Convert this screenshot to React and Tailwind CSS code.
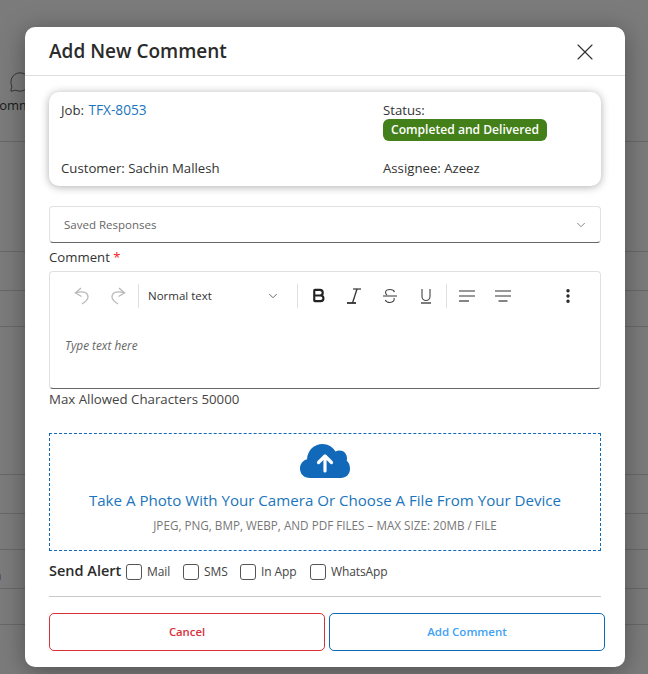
import { ChevronDown, X, Bold, EllipsisVertical, MessageCircle } from 'lucide-react';

const Row = ({ height, children }) => (
  <div className={`${height} border-b border-[#686868]`}>{children}</div>
);

const BackgroundPage = () => {
  return (
    <div className="h-[674px] overflow-hidden bg-[#7b7b7b] text-[#1a1a1a]">
      <Row height="h-[142px]">
        <div className="pt-[71px]">
          <MessageCircle className="ml-[9px] h-[22px] w-[22px] text-[#2d2d2d]" strokeWidth={1} />
          <p className="-ml-[9px] mt-[3px] whitespace-nowrap text-[13px]">Comm</p>
        </div>
      </Row>
      <Row height="h-[110px]" />
      <Row height="h-[39px]" />
      <Row height="h-[36px]" />
      <Row height="h-[148px]" />
      <Row height="h-[39px]" />
      <Row height="h-[36px]" />
      <Row height="h-[39px]">
        <p className="-ml-[6px] pt-[17px] text-[12px] leading-[18px] text-[#4a2a12]">n</p>
      </Row>
      <Row height="h-[36px]" />
    </div>
  );
};

const ToolbarButton = ({ children }) => (
  <div className="flex h-[36px] w-[36px] items-center justify-center">{children}</div>
);

const UndoIcon = ({ flip }) => (
  <svg viewBox="0 0 20 20" className={`h-[20px] w-[20px] ${flip ? '-scale-x-100' : ''}`} fill="none" stroke="#b8b8b8" strokeWidth="1.300">
    <path d="M9 2 3.500 7l6 3.500" />
    <path d="M3.500 7C9 5 16 5.500 16 11c0 3-3 5-6 7" />
  </svg>
);

const LinesIcon = ({ center }) => (
  <svg viewBox="0 0 16 12" className="h-[12px] w-[16px]" fill="none" stroke="#333" strokeWidth="1.200">
    <path d="M0 1h16M0 6h16" />
    <path d={center ? 'M3.500 11h9' : 'M0 11h10'} />
  </svg>
);

const ItalicIcon = () => (
  <svg viewBox="0 0 16 16" className="h-[16px] w-[16px]" fill="none" stroke="#333">
    <path d="M7 1h8" strokeWidth="1.200" />
    <path d="M11 1 6.500 15" strokeWidth="1.300" />
    <path d="M1 15h9" strokeWidth="1.800" />
  </svg>
);

const StrikeIcon = () => (
  <svg viewBox="0 0 16 16" className="h-[16px] w-[16px]" fill="none" stroke="#444" strokeWidth="1.100">
    <path d="M12.500 4C12 2.500 10.500 1.500 8 1.500S3.500 2.700 3.500 4.500c0 1 .5 1.700 1.500 2.500" />
    <path d="M1 8h14" />
    <path d="M12 10c.8 2.500-1 4.500-4 4.500-2.500 0-4-1-4.700-2.500" />
  </svg>
);

const UnderlineIcon = () => (
  <svg viewBox="0 0 16 16" className="h-[16px] w-[16px]" fill="none" stroke="#444" strokeWidth="1.100">
    <path d="M4 1v7.500a4 4 0 0 0 8 0V1" />
    <path d="M3 15h10" strokeWidth="1.400" />
  </svg>
);

const AlertOption = ({ label, width }) => (
  <label className={`flex items-center gap-[5px] ${width}`}>
    <span className="h-4 w-4 rounded-[3px] border border-[#555]" />
    <span className="text-[12px] tracking-[-0.1px] text-[#444]">{label}</span>
  </label>
);

const CloudIcon = () => (
  <svg viewBox="0 0 50 36" className="h-[36px] w-[50px]">
    <path
      fill="#1269b9"
      d="M10 35C4 35 0 31 0 25.500 0 21 3 17.500 7 16.300 7.500 7.500 14 1 22.500 1c5.500 0 10.500 3 13 7.500 1.200-.7 2.500-1 4-1 4.500 0 7.500 3.500 7.500 8 0 .8-.1 1.500-.3 2.200C49 19.500 50 22.500 50 26c0 5-4 9-9 9H10z"
    />
    <path d="M25 28V13M18.500 19.500 25 13l6.500 6.500" fill="none" stroke="#fff" strokeWidth="3.200" strokeLinecap="round" strokeLinejoin="round" />
  </svg>
);

const App = () => {
  return (
    <div className="relative h-[674px] w-[648px] overflow-hidden font-['Open_Sans','Noto_Sans',sans-serif]">
      <BackgroundPage />

      <div className="absolute left-[25px] top-[27px] h-[640px] w-[600px] rounded-[10px] bg-white shadow-[0_4px_24px_rgba(0,0,0,0.35)]">
        <div className="flex h-[49px] items-center justify-between border-b border-[#dedede] pl-[24px] pr-[26px] pt-[1px]">
          <h1 className="text-[19px] font-semibold text-[#2b2b2b]">Add New Comment</h1>
          <X className="h-[28px] w-[28px] text-[#333]" strokeWidth={1} />
        </div>

        <div className="px-[24px]">
          <div className="mt-[16px] grid h-[94px] grid-cols-[322px_1fr] rounded-[10px] bg-white px-[12px] pt-[9px] text-[13.200px] leading-[18px] text-[#333] shadow-[0_1px_8px_rgba(0,0,0,0.32)]">
            <div className="flex flex-col justify-between pb-[9px]">
              <p>Job: <span className="ml-[1px] text-[13.700px] text-[#1b75bc]">TFX-8053</span></p>
              <p>Customer: Sachin Mallesh</p>
            </div>
            <div className="flex flex-col justify-between pb-[9px]">
              <div>
                <p>Status:</p>
                <span className="inline-block h-[22px] rounded-[6px] bg-[#44801a] px-[8px] text-[12.100px] font-semibold leading-[21px] text-white">
                  Completed and Delivered
                </span>
              </div>
              <p>Assignee: Azeez</p>
            </div>
          </div>

          <div className="mt-[20px] flex h-[37px] items-center justify-between rounded-[4px] border border-[#e2e2e2] border-b-[#666] pl-[14px] pr-[12px]">
            <span className="text-[11.500px] text-[#666]">Saved Responses</span>
            <ChevronDown className="h-[14px] w-[14px] text-[#777]" strokeWidth={1.5} />
          </div>

          <p className="mt-[4px] text-[13.200px] leading-[20px] text-[#333]">Comment <span className="text-[#f01c1c]">*</span></p>

          <div className="mt-[4px] h-[118px] rounded-[4px] border border-[#e0e0e0] border-b-[#666]">
            <div className="flex h-[44px] items-center pl-[14px] pt-[3px]">
              <ToolbarButton><UndoIcon /></ToolbarButton>
              <ToolbarButton><UndoIcon flip /></ToolbarButton>
              <div className="ml-[2px] h-[24px] w-px bg-[#e0e0e0]" />
              <div className="flex w-[158px] items-center justify-between pl-[9px] pr-[17px]">
                <span className="text-[11.500px] text-[#333]">Normal text</span>
                <ChevronDown className="h-[14px] w-[14px] text-[#555]" strokeWidth={1.5} />
              </div>
              <div className="h-[24px] w-px bg-[#e0e0e0]" />
              <div className="ml-[2px] flex">
                <ToolbarButton><Bold className="h-[17px] w-[17px] text-[#222]" strokeWidth={3} /></ToolbarButton>
                <ToolbarButton><ItalicIcon /></ToolbarButton>
                <ToolbarButton><StrikeIcon /></ToolbarButton>
                <ToolbarButton><UnderlineIcon /></ToolbarButton>
              </div>
              <div className="ml-[2px] h-[24px] w-px bg-[#e0e0e0]" />
              <div className="ml-[2px] flex">
                <ToolbarButton><LinesIcon /></ToolbarButton>
                <ToolbarButton><LinesIcon center /></ToolbarButton>
              </div>
              <div className="ml-[38px]">
                <EllipsisVertical className="h-[18px] w-[18px] text-[#222]" strokeWidth={2.5} />
              </div>
            </div>
            <p className="mt-[21px] pl-[15px] text-[11.800px] italic text-[#666]">Type text here</p>
          </div>

          <p className="text-[13.270px] leading-[20px] text-[#444]">Max Allowed Characters 50000</p>

          <div className="mt-[24px] flex h-[118px] flex-col items-center border border-dashed border-[#1269b9] pt-[9px]">
            <CloudIcon />
            <p className="mt-[9px] whitespace-nowrap text-[15.100px] leading-[24px] text-[#1b75bc]">Take A Photo With Your Camera Or Choose A File From Your Device</p>
            <p className="mt-[3px] whitespace-nowrap text-[11.700px] leading-[20px] text-[#777]">JPEG, PNG, BMP, WEBP, AND PDF FILES – MAX SIZE: 20MB / FILE</p>
          </div>

          <div className="mt-[11px] flex h-[20px] items-center">
            <span className="w-[77px] whitespace-nowrap pb-[2px] text-[14.500px] font-semibold text-[#2b2b2b]">Send Alert</span>
            <AlertOption label="Mail" width="w-[57px]" />
            <AlertOption label="SMS" width="w-[57px]" />
            <AlertOption label="In App" width="w-[70px]" />
            <AlertOption label="WhatsApp" width="w-[90px]" />
          </div>

          <div className="mt-[14px] h-px bg-[#c8c8c8]" />

          <div className="-mr-[4px] mt-[16px] flex gap-[4px]">
            <button className="h-[38px] w-[276px] shrink-0 rounded-[5px] border border-[#d9303a] text-[11.300px] font-semibold text-[#d9303a]">Cancel</button>
            <button className="h-[38px] w-[276px] shrink-0 rounded-[5px] border border-[#1269b9] text-[11.500px] font-semibold text-[#3fa1f5]">Add Comment</button>
          </div>
        </div>
      </div>
    </div>
  );
};

export default App;
